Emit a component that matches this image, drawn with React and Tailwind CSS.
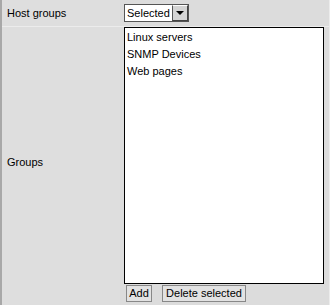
export default function App() {
  return (
    <div className="w-[330px] h-[305px] bg-[#dcdcdc] font-['Liberation_Sans',Arial,sans-serif] text-[11px] text-black">
      <div className="grid grid-cols-[118px_1fr] grid-rows-[27px_1fr] h-full border-l-2 border-[#a8a8a8]">
        <div className="bg-[#dedede] flex items-center pl-[5px] border-b border-[#ececec]">Host groups</div>
        <div className="bg-[#dcdcdc] flex items-center pl-[4px] border-b border-[#ececec] border-r border-r-[#ececec]">
          <div className="flex items-stretch h-[18px] bg-white border border-[#555]">
            <span className="px-[2px] leading-[16px]">Selected</span>
            <span className="w-[16px] bg-[#d4d4d4] border-l border-l-[#555] border-t border-t-white border-r border-r-[#444] border-b border-b-[#444] flex items-center justify-center">
              <svg width="8" height="5" viewBox="0 0 8 5"><path d="M0 0H8L4 4Z" fill="#000" /></svg>
            </span>
          </div>
        </div>
        <div className="bg-[#dedede] flex items-center pl-[5px] pb-[8px]">Groups</div>
        <div className="bg-[#dcdcdc] pl-[4px] pr-[5px] flex flex-col border-r border-[#ececec]">
          <div className="h-[257px] bg-white border border-black flex flex-col pt-[1px] pl-[2px]">
            <div className="leading-[17px]">Linux servers</div>
            <div className="leading-[17px]">SNMP Devices</div>
            <div className="leading-[17px]">Web pages</div>
          </div>
          <div className="flex gap-[10px] mt-[1px] pl-[2px]">
            <button className="h-[17px] w-[26px] border border-[#888] bg-[#e2e2e2] leading-[15px]">Add</button>
            <button className="h-[17px] w-[84px] border border-[#888] bg-[#e2e2e2] leading-[15px]">Delete selected</button>
          </div>
        </div>
      </div>
    </div>
  );
}
